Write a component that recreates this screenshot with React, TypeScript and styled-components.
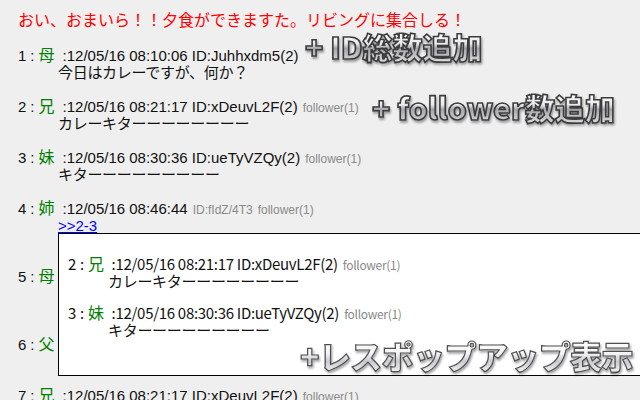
import React from "react";
import styled, { createGlobalStyle } from "styled-components";

const Global = createGlobalStyle`
  html, body { margin: 0; padding: 0; background: #efefef; overflow: hidden; }
  body { font-family: "Liberation Sans", "Noto Sans CJK JP", sans-serif; }
`;

const Page = styled.div`
  position: relative;
  width: 640px;
  height: 400px;
  overflow: hidden;
  box-sizing: border-box;
  padding: 9px 0 0 18px;
  background: #efefef;
`;

const Title = styled.div`
  font-family: "Noto Sans CJK JP", sans-serif;
  font-size: 16px;
  line-height: 20px;
  color: #ff0000;
  white-space: nowrap;
  margin-bottom: 17px;
`;

const PostWrap = styled.div<{ $compact?: boolean }>`
  margin-bottom: ${(p) => (p.$compact ? 15 : 17)}px;
`;

const Header = styled.div`
  display: flex;
  align-items: baseline;
  height: 17px;
  line-height: 17px;
  white-space: nowrap;
  font-size: 15px;
  color: #111;
`;

const Num = styled.span``;

const Sep = styled.span`
  margin-left: 4px;
`;

const Name = styled.span`
  margin-left: 4px;
  font-family: "Noto Sans CJK JP", sans-serif;
  font-size: 16px;
  color: #008000;
`;

const Meta = styled.span`
  margin-left: 8px;
`;

const Small = styled.span`
  margin-left: 5px;
  font-size: 12px;
  color: #8a8a8a;
`;

const Body = styled.div`
  position: relative;
  padding-left: 40px;
  font-family: "Noto Sans CJK JP", sans-serif;
  font-size: 15px;
  line-height: 17px;
  letter-spacing: -0.3px;
  color: #111;
  white-space: nowrap;
`;

const Line = styled.div`
  height: 17px;
`;

const Anchor = styled.a`
  font-family: "Liberation Sans", sans-serif;
  font-size: 15px;
  color: #0000ff;
  text-decoration: underline;
  letter-spacing: 0;
`;

const Popup = styled.div`
  position: absolute;
  left: 40px;
  top: 17px;
  width: 640px;
  box-sizing: border-box;
  background: #ffffff;
  border: 1px solid #000;
  padding: 21px 9px 22px;
  z-index: 2;
`;

const Label = styled.div<{ $x: number; $y: number; $size: number; $soft?: boolean }>`
  position: absolute;
  left: ${(p) => p.$x}px;
  top: ${(p) => p.$y}px;
  z-index: 5;
  font-family: "Noto Sans CJK JP", sans-serif;
  font-weight: 900;
  font-size: ${(p) => p.$size}px;
  letter-spacing: ${(p) => (p.$soft ? "-0.6px" : "0")};
  line-height: 1;
  white-space: nowrap;
  color: transparent;
  background: ${(p) =>
    p.$soft
      ? "linear-gradient(180deg, #ffffff 0%, #f4f4f6 45%, #c9c9cf 70%, #eeeeef 100%)"
      : "linear-gradient(180deg, #ffffff 0%, #e9e9ee 42%, #a4a4ac 58%, #d6d6da 100%)"};
  -webkit-background-clip: text;
  background-clip: text;
  -webkit-text-stroke: ${(p) => (p.$soft ? "1.2px #505050" : "1.6px #3c3c3c")};
  filter: drop-shadow(1px 2px 1px rgba(0, 0, 0, 0.35));
`;

type PostProps = {
  no: number;
  name: string;
  date: string;
  id?: string;
  grayId?: string;
  follower?: boolean;
  lines: React.ReactNode[];
  compact?: boolean;
  children?: React.ReactNode;
};

function Post({ no, name, date, id, grayId, follower, lines, compact, children }: PostProps) {
  return (
    <PostWrap $compact={compact}>
      <Header>
        <Num>{no}</Num>
        <Sep>:</Sep>
        <Name>{name}</Name>
        <Meta>
          :{date}
          {id ? ` ID:${id}` : ""}
        </Meta>
        {grayId && <Small>ID:{grayId}</Small>}
        {follower && <Small>follower(1)</Small>}
      </Header>
      <Body>
        {lines.map((l, i) => (
          <Line key={i}>{l}</Line>
        ))}
        {children}
      </Body>
    </PostWrap>
  );
}

export default function App() {
  return (
    <>
      <Global />
      <Page>
        <Title>おい、おまいら！！夕食ができますた。リビングに集合しる！</Title>
        <Post no={1} name="母" date="12/05/16 08:10:06" id="Juhhxdm5(2)" lines={["今日はカレーですが、何か？"]} />
        <Post no={2} name="兄" date="12/05/16 08:21:17" id="xDeuvL2F(2)" follower lines={["カレーキターーーーーーーー"]} />
        <Post no={3} name="妹" date="12/05/16 08:30:36" id="ueTyVZQy(2)" follower lines={["キターーーーーーーーー"]} />
        <Post
          no={4}
          name="姉"
          date="12/05/16 08:46:44"
          grayId="fIdZ/4T3"
          follower
          lines={[<Anchor href="#r2">&gt;&gt;2-3</Anchor>, ""]}
        >
          <Popup>
            <Post compact no={2} name="兄" date="12/05/16 08:21:17" id="xDeuvL2F(2)" follower lines={["カレーキターーーーーーーー"]} />
            <Post compact no={3} name="妹" date="12/05/16 08:30:36" id="ueTyVZQy(2)" follower lines={["キターーーーーーーーー"]} />
          </Popup>
        </Post>
        <Post no={5} name="母" date="12/05/16 08:50:12" id="Juhhxdm5(2)" lines={[">>4", "おかわりもありますよ"]} />
        <Post no={6} name="父" date="12/05/16 08:55:03" id="pQw8Rt2K" lines={["いただきます"]} />
        <Post no={7} name="兄" date="12/05/16 08:21:17" id="xDeuvL2F(2)" follower lines={["カレーキターーーーーーーー"]} />

        <Label $x={305} $y={31} $size={30}>+ ID総数追加</Label>
        <Label $x={372} $y={92} $size={30}>+ follower数追加</Label>
        <Label $x={300} $y={339} $size={32} $soft>+レスポップアップ表示</Label>
      </Page>
    </>
  );
}
